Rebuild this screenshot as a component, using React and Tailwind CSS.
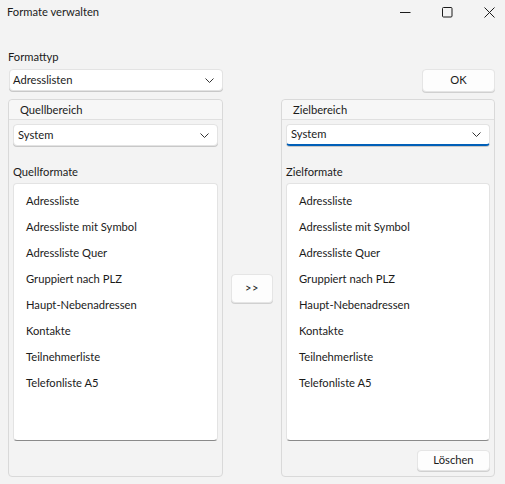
import React from "react";

const formats = [
  "Adressliste",
  "Adressliste mit Symbol",
  "Adressliste Quer",
  "Gruppiert nach PLZ",
  "Haupt-Nebenadressen",
  "Kontakte",
  "Teilnehmerliste",
  "Telefonliste A5",
];

function Chevron() {
  return (
    <svg width="9" height="5" viewBox="0 0 9 5" fill="none" stroke="#333" strokeWidth="1">
      <path d="M0.5 0.5 L4.5 4.5 L8.5 0.5" />
    </svg>
  );
}

function Combo({ value, focused, className = "" }) {
  return (
    <div
      className={
        "flex items-center justify-between bg-white rounded-[4px] border border-[#e3e3e3] shadow-[0_1px_0_#c8c8c8] " +
        (focused ? "border-b-2 border-b-[#005fb8] " : "") +
        className
      }
    >
      <span className="pl-[3px]">{value}</span>
      <span className="pr-[8px] flex items-center">
        <Chevron />
      </span>
    </div>
  );
}

function Button({ children, className = "" }) {
  return (
    <div
      className={
        "flex items-center justify-center bg-[#fdfdfd] rounded-[4px] border border-[#e5e5e5] shadow-[0_1px_0_#d0d0d0] " +
        className
      }
    >
      {children}
    </div>
  );
}

function GroupBox({ title, label, focused, footer }) {
  return (
    <div className="flex flex-col h-[378px] rounded-[4px] border border-[#d9d9d9] bg-[#f3f3f3]">
      <div className="h-[20px] flex items-center pl-[11px] pt-[2px] border-b border-[#e0e0e0] bg-[#f7f7f7] rounded-t-[4px]">
        {title}
      </div>
      <Combo value="System" focused={focused} className="mx-[4px] mt-[4px] h-[22px] [&>span:first-child]:pl-[4px]" />
      <div className="mx-[4px] mt-[18px] h-[16px] leading-[16px]">{label}</div>
      <div className="mx-[4px] mt-[3px] h-[258px] bg-white rounded-[4px] border border-[#e3e3e3] border-b-[#8a8a8a] pt-[4px] pl-[12px]">
        {formats.map((f) => (
          <div key={f} className="h-[26px] leading-[26px]">
            {f}
          </div>
        ))}
      </div>
      {footer}
    </div>
  );
}

export default function App() {
  return (
    <div
      className="w-[505px] h-[484px] bg-[#f3f3f3] text-[#1b1b1b] text-[11.2px] overflow-hidden"
      style={{ fontFamily: 'Lato, "Noto Sans", sans-serif' }}
    >
      {/* title bar */}
      <div className="h-[30px] flex items-start">
        <div className="pl-[7px] pt-[4px] leading-[16px] flex-1">Formate verwalten</div>
        <div className="flex items-start pt-[7px]">
          <svg width="11" height="11" viewBox="0 0 11 11" className="mr-[31px]" stroke="#1b1b1b" strokeWidth="1">
            <path d="M0 5.5 H10.5" />
          </svg>
          <svg width="11" height="11" viewBox="0 0 11 11" className="mr-[31px]" fill="none" stroke="#1b1b1b" strokeWidth="1">
            <rect x="0.5" y="0.5" width="9.5" height="9.5" rx="1" />
          </svg>
          <svg width="11" height="11" viewBox="0 0 11 11" className="mr-[10px]" stroke="#1b1b1b" strokeWidth="1">
            <path d="M0.5 0.5 L10.5 10.5 M10.5 0.5 L0.5 10.5" />
          </svg>
        </div>
      </div>

      <div className="pl-[8px] pr-[10px]">
        <div className="pt-[19px] h-[35px] leading-[16px]">Formattyp</div>
        <div className="mt-[4px] flex items-start justify-between">
          <Combo value="Adresslisten" className="ml-[1px] w-[214px] h-[22px]" />
          <Button className="w-[73px] h-[23px]">OK</Button>
        </div>

        <div className="mt-[7px] flex">
          <div className="w-[215px]">
            <GroupBox title="Quellbereich" label="Quellformate" />
          </div>
          <div className="w-[58px] flex flex-col items-center pt-[175px]">
            <Button className="w-[42px] h-[29px] tracking-[0.5px]">&gt;&gt;</Button>
          </div>
          <div className="w-[214px]">
            <GroupBox
              title="Zielbereich"
              label="Zielformate"
              focused
              footer={
                <div className="flex justify-end mx-[4px] mt-[9px]">
                  <Button className="w-[73px] h-[21px]">Löschen</Button>
                </div>
              }
            />
          </div>
        </div>
      </div>
    </div>
  );
}
